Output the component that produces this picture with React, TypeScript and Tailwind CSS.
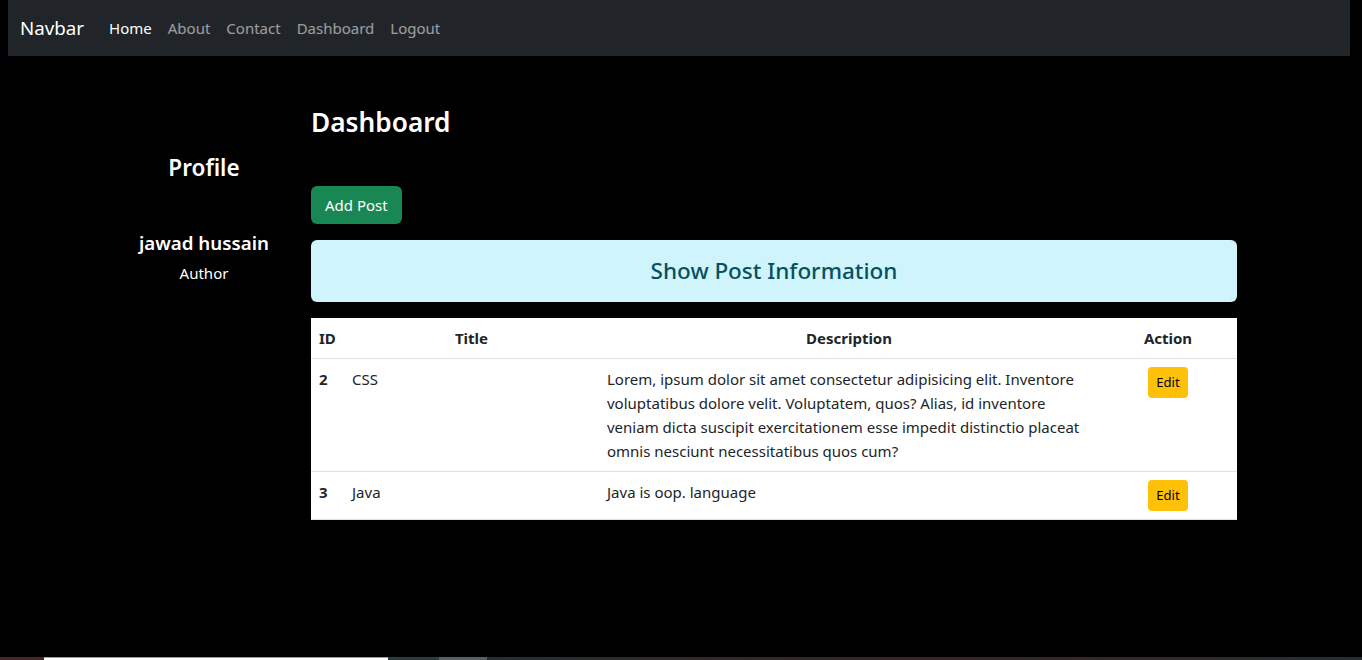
import React from "react";

const posts = [
  {
    id: 2,
    title: "CSS",
    description:
      "Lorem, ipsum dolor sit amet consectetur adipisicing elit. Inventore voluptatibus dolore velit. Voluptatem, quos? Alias, id inventore veniam dicta suscipit exercitationem esse impedit distinctio placeat omnis nesciunt necessitatibus quos cum?",
  },
  { id: 3, title: "Java", description: "Java is oop. language" },
];

export default function App() {
  return (
    <div className="h-[660px] overflow-hidden bg-black font-['Noto_Sans',sans-serif] text-[15px] leading-[24px] flex flex-col">
      {/* Navbar */}
      <nav className="ml-[8px] mr-[12px] h-[56px] shrink-0 bg-[#212529] flex items-center px-[12px]">
        <span className="text-white text-[18.75px] mr-[17px]">Navbar</span>
        <div className="flex">
          <a className="px-[8px] text-white">Home</a>
          <a className="px-[8px] text-white/55">About</a>
          <a className="px-[8px] text-white/55">Contact</a>
          <a className="px-[8px] text-white/55">Dashboard</a>
          <a className="px-[8px] text-white/55">Logout</a>
        </div>
      </nav>

      <div className="flex flex-1 pl-[121px]">
        {/* Profile column */}
        <div className="w-[166px] text-center text-white pt-[97px]">
          <h3 className="text-[22.5px] leading-[29px] font-semibold">Profile</h3>
          <h5 className="text-[18.75px] leading-[24px] font-semibold mt-[49px]">jawad hussain</h5>
          <p className="mt-[6px]">Author</p>
        </div>

        {/* Main column */}
        <div className="w-[926px] ml-[24px] pt-[49px]">
          <h2 className="text-white text-[26.25px] leading-[34px] font-semibold">Dashboard</h2>
          <button className="mt-[47px] bg-[#198754] text-white rounded-[6px] px-[14px] py-[6px] h-[38px] leading-[26px]">
            Add Post
          </button>
          <div className="mt-[16px] h-[62px] bg-[#cff4fc] text-[#055160] rounded-[6px] flex items-center justify-center text-[22.5px] font-medium">
            Show Post Information
          </div>

          <table className="mt-[16px] w-full bg-white text-[#212529] border-collapse">
            <thead>
              <tr className="border-b border-[#dee2e6]">
                <th className="p-[8px] text-left w-[33px] font-bold">ID</th>
                <th className="p-[8px] text-center w-[255px] font-bold">Title</th>
                <th className="p-[8px] text-center w-[500px] font-bold">Description</th>
                <th className="p-[8px] text-center font-bold">Action</th>
              </tr>
            </thead>
            <tbody>
              {posts.map((p) => (
                <tr key={p.id} className="border-b border-[#dee2e6] align-top">
                  <td className="p-[8px] font-bold">{p.id}</td>
                  <td className="p-[8px]">{p.title}</td>
                  <td className="p-[8px] pr-[16px]">{p.description}</td>
                  <td className="p-[8px] text-center">
                    <button className="bg-[#ffc107] text-black text-[13.125px] leading-[23px] px-[8px] py-[4px] rounded-[4px]">
                      Edit
                    </button>
                  </td>
                </tr>
              ))}
            </tbody>
          </table>
        </div>
      </div>

      {/* taskbar strip at the bottom edge */}
      <div className="h-[3px] shrink-0 flex">
        <div className="w-[44px] bg-[#4a2426]" />
        <div className="w-[344px] bg-white border-t border-[#a0a0a0]" />
        <div className="w-[51px] bg-[#2f3a3a]" />
        <div className="w-[48px] bg-[#5a5f5f]" />
        <div className="flex-1 bg-gradient-to-r from-[#263030] via-[#3a2428] to-[#263030]" />
      </div>
    </div>
  );
}
